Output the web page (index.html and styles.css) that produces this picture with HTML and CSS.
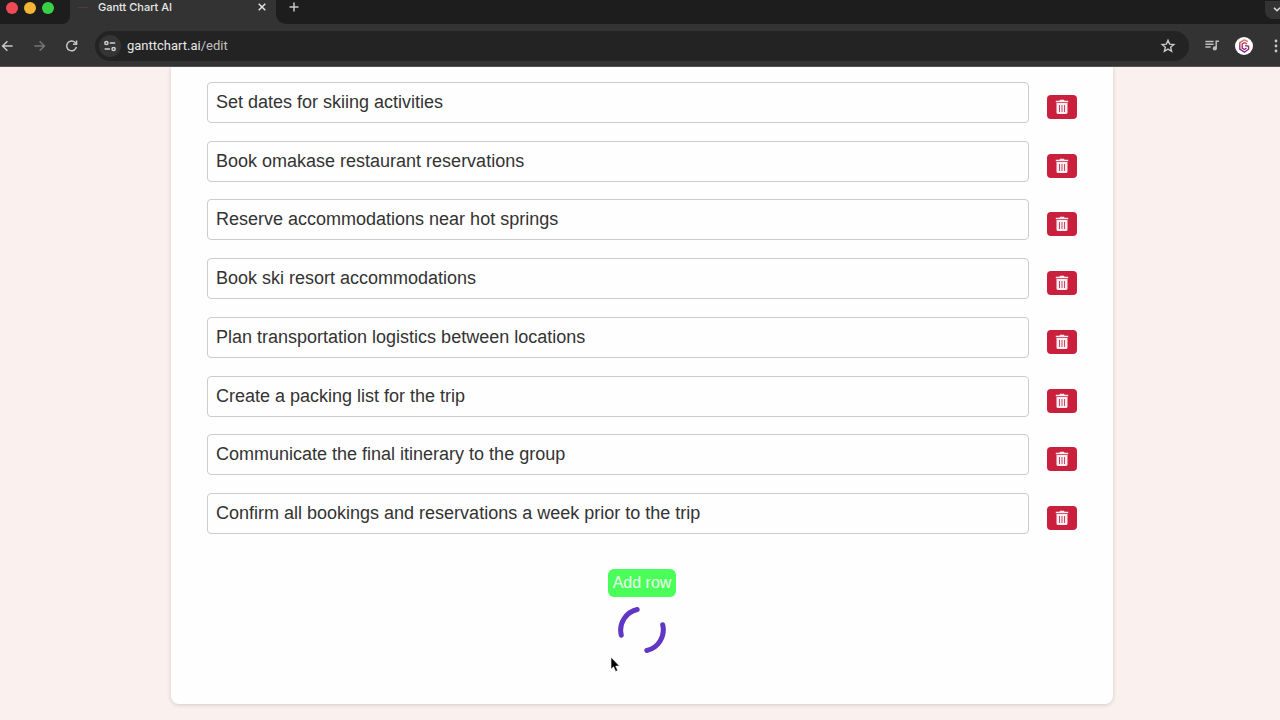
FILE: index.html
```html
<!DOCTYPE html>
<html lang="en">
<head>
<meta charset="utf-8">
<meta name="viewport" content="width=device-width, initial-scale=1">
<title>Gantt Chart AI</title>
<link rel="stylesheet" href="styles.css">
</head>
<body>
<header class="browser">
  <div class="tabstrip">
    <div class="lights-wrap"><div class="lights"><span class="light red"></span><span class="light yellow"></span><span class="light green"></span></div></div>
    <div class="tab">
      <span class="favicon"></span>
      <span class="tab-title">Gantt Chart AI</span>
      <button class="icon-button" aria-label="Close tab"><svg width="10" height="10" viewBox="0 0 10 10"><path d="M1.7 1.7l6.6 6.6M8.3 1.7L1.7 8.3" stroke="#e3e3e3" stroke-width="1.5"/></svg></button>
    </div>
    <div class="strip-rest">
      <button class="icon-button" aria-label="New tab"><svg width="12" height="12" viewBox="0 0 12 12"><path d="M6 1.5v9M1.5 6h9" stroke="#c8c8c8" stroke-width="1.5"/></svg></button>
      <button class="tab-search" aria-label="Search tabs"><svg width="8" height="8" viewBox="0 0 8 8"><path d="M1 1.7l3 3 3-3" fill="none" stroke="#dcdcdc" stroke-width="1.6"/></svg></button>
    </div>
  </div>
  <div class="toolbar">
    <nav class="nav">
      <button class="icon-button" aria-label="Back"><svg width="16" height="16" viewBox="0 0 16 16" fill="none" stroke="#c7c7c7" stroke-width="1.5"><path d="M12.6 8H2.6M7.4 3.2L2.6 8l4.8 4.8"/></svg></button>
      <button class="icon-button" aria-label="Forward"><svg width="16" height="16" viewBox="0 0 16 16" fill="none" stroke="#777" stroke-width="1.5"><path d="M2.4 8h10M7.6 3.2L12.4 8l-4.8 4.8"/></svg></button>
      <button class="icon-button" aria-label="Reload"><svg width="16" height="16" viewBox="0 0 16 16" fill="none" stroke="#c7c7c7" stroke-width="1.5"><path d="M12.4 8.8a4.9 4.9 0 1 1-1.2-4.2l1.2 1.3"/><path d="M12.6 2.6v3.6H9"/></svg></button>
    </nav>
    <div class="omnibox">
      <button class="site-info" aria-label="Site information"><svg width="14" height="14" viewBox="0 0 14 14" fill="none" stroke="#d0d0d0" stroke-width="1.5"><circle cx="3.4" cy="4" r="1.6"/><path d="M6.8 4h5.4M1.6 10h5.4"/><circle cx="10.6" cy="10" r="1.6"/></svg></button>
      <div class="url">ganttchart.ai<span class="path">/edit</span></div>
      <button class="icon-button" aria-label="Bookmark this page"><svg width="16" height="16" viewBox="0 0 16 16"><path d="M8 2.2l1.65 3.9 4.2.35-3.2 2.75.97 4.1L8 11.1l-3.62 2.2.97-4.1-3.2-2.75 4.2-.35z" fill="none" stroke="#c7c7c7" stroke-width="1.4"/></svg></button>
    </div>
    <div class="actions">
      <button class="icon-button" aria-label="Media controls"><svg width="16" height="16" viewBox="0 0 16 16" fill="none" stroke="#bdbdbd" stroke-width="1.5"><path d="M1.4 3.4h8.2M1.4 6.2h8.2M1.4 9h5.2M12.2 10.4V3.3H15"/><circle cx="10.8" cy="10.4" r="2.1" fill="#bdbdbd" stroke="none"/></svg></button>
      <button class="avatar" aria-label="Profile"><svg width="18" height="18" viewBox="0 0 18 18"><defs><linearGradient id="brand" x1="0" y1="0" x2="0" y2="1"><stop offset="0" stop-color="#d9835f"/><stop offset=".5" stop-color="#a8286f"/><stop offset="1" stop-color="#7a2e90"/></linearGradient></defs><circle cx="9" cy="9" r="9" fill="#fff"/><path d="M12.8 4.6L9.4 2.9 4.8 5.6v6.6l4.6 3 4.2-3V9.2l-3.6-.6M12 6.8L9.6 5.6 7.2 7v4l2.3 1.5 2-1.3" fill="none" stroke="url(#brand)" stroke-width="1.4"/></svg></button>
      <button class="icon-button" aria-label="Menu"><svg width="16" height="16" viewBox="0 0 16 16" fill="#c7c7c7"><circle cx="8" cy="3" r="1.4"/><circle cx="8" cy="8" r="1.4"/><circle cx="8" cy="13" r="1.4"/></svg></button>
    </div>
  </div>
</header>
<svg class="sprite" aria-hidden="true"><symbol id="trash" viewBox="0 0 14 16"><path d="M.8 1.8h3.7L5 .7h4l.5 1.1h3.7v1.4H.8z" fill="#ffeef1"/><path d="M1.5 4h11v9.4q0 1.6-1.6 1.6H3.1q-1.6 0-1.6-1.6z" fill="#ffeef1"/><path d="M4.5 6v7M7 6v7M9.5 6v7" stroke="#cf4660" stroke-width="1"/></symbol></svg>
<main class="card">
  <ul class="tasks">
    <li class="task"><input class="task-name" aria-label="Task 1" value="Set dates for skiing activities"><button class="delete" aria-label="Delete task 1"><svg width="14" height="16"><use href="#trash"/></svg></button></li>
    <li class="task"><input class="task-name" aria-label="Task 2" value="Book omakase restaurant reservations"><button class="delete" aria-label="Delete task 2"><svg width="14" height="16"><use href="#trash"/></svg></button></li>
    <li class="task"><input class="task-name" aria-label="Task 3" value="Reserve accommodations near hot springs"><button class="delete" aria-label="Delete task 3"><svg width="14" height="16"><use href="#trash"/></svg></button></li>
    <li class="task"><input class="task-name" aria-label="Task 4" value="Book ski resort accommodations"><button class="delete" aria-label="Delete task 4"><svg width="14" height="16"><use href="#trash"/></svg></button></li>
    <li class="task"><input class="task-name" aria-label="Task 5" value="Plan transportation logistics between locations"><button class="delete" aria-label="Delete task 5"><svg width="14" height="16"><use href="#trash"/></svg></button></li>
    <li class="task"><input class="task-name" aria-label="Task 6" value="Create a packing list for the trip"><button class="delete" aria-label="Delete task 6"><svg width="14" height="16"><use href="#trash"/></svg></button></li>
    <li class="task"><input class="task-name" aria-label="Task 7" value="Communicate the final itinerary to the group"><button class="delete" aria-label="Delete task 7"><svg width="14" height="16"><use href="#trash"/></svg></button></li>
    <li class="task"><input class="task-name" aria-label="Task 8" value="Confirm all bookings and reservations a week prior to the trip"><button class="delete" aria-label="Delete task 8"><svg width="14" height="16"><use href="#trash"/></svg></button></li>
  </ul>
  <div class="footer">
    <button class="add-row">Add row</button>
    <svg class="spinner" width="50" height="50" viewBox="0 0 50 50" fill="none" stroke="#6036c4" stroke-width="5" stroke-linecap="round" role="img" aria-label="Loading"><path d="M20.2 4.5A21.2 21.2 0 0 0 4.3 30.2M45.7 19.8A21.2 21.2 0 0 1 29.8 45.5"/></svg>
  </div>
</main>
<svg class="cursor" width="12" height="18" viewBox="0 0 12 18" aria-hidden="true"><path d="M2 1.2v12l2.6-2.4 2 4.6 2.1-.9-2-4.4h3.8z" fill="#000" stroke="#fff" stroke-width=".6"/></svg>
</body>
</html>
```
FILE: styles.css
```css
* { box-sizing: border-box; }
body {
  margin: 0;
  min-height: 100vh;
  display: flex;
  flex-direction: column;
  background: #faf0ee;
  font-family: "Liberation Sans", Arial, sans-serif;
}
button { border: 0; padding: 0; background: none; font: inherit; }
svg { display: block; }
.sprite { position: absolute; width: 0; height: 0; }

.browser { overflow: hidden; background: #333; font-family: Inter, sans-serif; color: #e8e8e8; }
.tabstrip { display: flex; height: 24px; background: #333; }
.lights { display: flex; gap: 6px; width: 70px; height: 24px; padding: 2px 0 0 6px; background: #1d1d1d; border-bottom-right-radius: 8px; }
.light { width: 12px; height: 12px; border-radius: 50%; }
.red { background: #ef4a55; }
.yellow { background: #f5b434; }
.green { background: #37d345; }
.tab { display: flex; align-items: center; width: 206px; padding: 0 9px 10px 8px; font-size: 11px; line-height: 14px; }
.favicon { width: 10px; height: 1px; margin-right: 10px; background: #59393c; }
.tab-title { flex: 1; font-weight: 500; }
.strip-rest { flex: 1; display: flex; justify-content: space-between; align-items: flex-start; padding: 1px 0 0 12px; background: #1d1d1d; border-bottom-left-radius: 10px; }
.tab-search { width: 15px; height: 18px; padding-left: 8px; background: #333; border-bottom-left-radius: 8px; }

.toolbar { display: flex; align-items: center; height: 43px; padding-top: 1px; border-bottom: 1px solid #555; }
.nav { display: flex; gap: 16px; padding-right: 15px; }
.omnibox { flex: 1; display: flex; align-items: center; height: 30px; padding: 0 13px 0 4px; border-radius: 15px; background: #232323; }
.site-info { display: grid; place-items: center; width: 22px; height: 22px; border-radius: 50%; background: #353535; }
.url { flex: 1; padding-left: 6px; font-family: Roboto, sans-serif; font-size: 13px; line-height: 16px; }
.path { color: #c2c2c2; }
.actions { display: flex; align-items: center; gap: 15px; padding-left: 15px; margin-right: -4px; }

.card {
  flex: 1;
  display: flex;
  flex-direction: column;
  margin: 0 167px 16px 171px;
  padding: 15px 36px 49px;
  background: #fefefe;
  border-radius: 0 0 8px 8px;
  box-shadow: 0 1px 4px rgba(0, 0, 0, 0.16);
}
.tasks { flex: 1; display: flex; flex-direction: column; justify-content: space-between; gap: 16px; margin: 0; padding: 0; list-style: none; }
.task { display: flex; align-items: flex-end; gap: 18px; }
.task-name {
  flex: 1;
  min-width: 0;
  height: 41px;
  padding: 0 8px;
  border: 1px solid #ccc;
  border-radius: 4px;
  background: #fefefe;
  color: #333;
  font: 18px "Liberation Sans", Arial, sans-serif;
}
.delete { display: grid; place-items: center; width: 30px; height: 24px; margin-bottom: 4px; border-radius: 4px; background: #ca1f3d; }
.footer { display: flex; flex-direction: column; align-items: center; gap: 8px; padding-top: 35px; }
.add-row { padding: 5px; border-radius: 6px; background: #4bff5b; color: #e9ffeb; font-size: 16px; line-height: 18px; }
.cursor { position: absolute; left: 609px; top: 656px; }
```
